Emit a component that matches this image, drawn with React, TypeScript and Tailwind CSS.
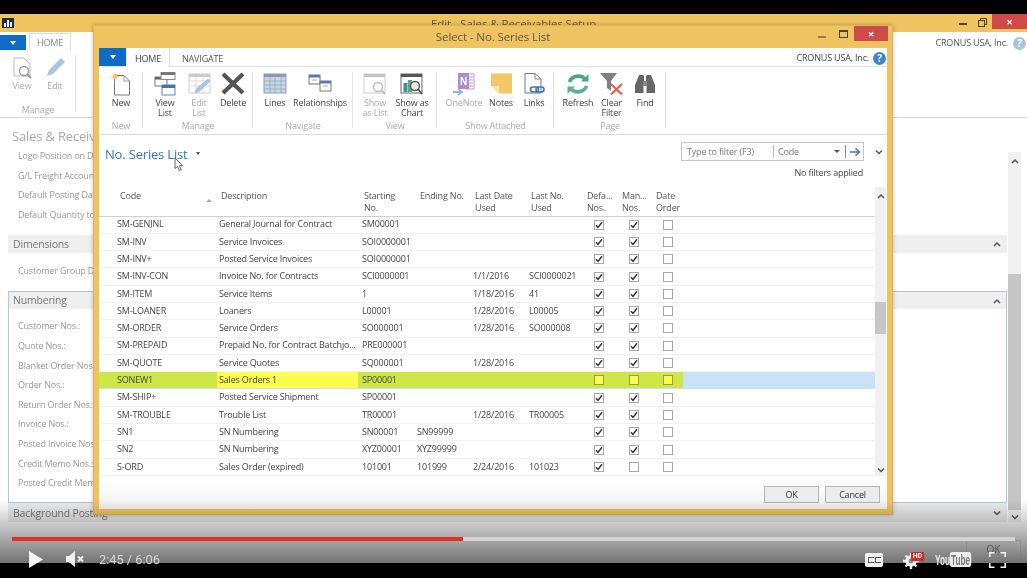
import React from "react";

const rows: [string, string, string, string, string, string, boolean, boolean, boolean][] = [
  ["SM-GENJNL", "General Journal for Contract", "SM00001", "", "", "", true, true, false],
  ["SM-INV", "Service Invoices", "SOI0000001", "", "", "", true, true, false],
  ["SM-INV+", "Posted Service Invoices", "SOI0000001", "", "", "", true, true, false],
  ["SM-INV-CON", "Invoice No. for Contracts", "SCI0000001", "", "1/1/2016", "SCI0000021", true, true, false],
  ["SM-ITEM", "Service Items", "1", "", "1/18/2016", "41", true, true, false],
  ["SM-LOANER", "Loaners", "L00001", "", "1/28/2016", "L00005", true, true, false],
  ["SM-ORDER", "Service Orders", "SO000001", "", "1/28/2016", "SO000008", true, true, false],
  ["SM-PREPAID", "Prepaid No. for Contract Batchjo...", "PRE000001", "", "", "", true, true, false],
  ["SM-QUOTE", "Service Quotes", "SQ000001", "", "1/28/2016", "", true, true, false],
  ["SONEW1", "Sales Orders 1", "SP00001", "", "", "", false, false, false],
  ["SM-SHIP+", "Posted Service Shipment", "SP00001", "", "", "", true, true, false],
  ["SM-TROUBLE", "Trouble List", "TR00001", "", "1/28/2016", "TR00005", true, true, false],
  ["SN1", "SN Numbering", "SN00001", "SN99999", "", "", true, true, false],
  ["SN2", "SN Numbering", "XYZ00001", "XYZ99999", "", "", true, true, false],
  ["S-ORD", "Sales Order (expired)", "101001", "101999", "2/24/2016", "101023", true, false, false],
];

function Check({ on, hl }: { on: boolean; hl?: boolean }) {
  return (
    <div className={`w-[10px] h-[10px] border flex items-center justify-center ${hl ? "border-[#9a9a60] bg-[#fdfb4e]" : "border-[#a8a8a8] bg-white"}`}>
      {on && (
        <svg width="8" height="8" viewBox="0 0 8 8">
          <path d="M1 4.2 L3 6.4 L7 1.2" fill="none" stroke="#333" strokeWidth="1.5" />
        </svg>
      )}
    </div>
  );
}

function Chevron({ up, className = "" }: { up?: boolean; className?: string }) {
  return (
    <svg width="8" height="6" viewBox="0 0 8 6" className={className}>
      <path d={up ? "M1 5 L4 2 L7 5" : "M1 1.5 L4 4.5 L7 1.5"} fill="none" stroke="#555" strokeWidth="1.5" />
    </svg>
  );
}

function Help({ color }: { color: string }) {
  return (
    <div className="w-[13px] h-[13px] rounded-full flex items-center justify-center text-white text-[10px] font-bold leading-none" style={{ backgroundColor: color }}>
      ?
    </div>
  );
}

const I = ({ w = 30, children }: { w?: number; children: React.ReactNode }) => (
  <svg width={w} height="24" viewBox={`0 0 ${w} 24`}>{children}</svg>
);

const IconNew = () => (
  <I>
    <path d="M8.5 3.5 H18 L23.5 9 V23 H8.5 Z" fill="#fff" stroke="#777" />
    <path d="M18 3.5 V9 H23.5" fill="none" stroke="#999" />
    <circle cx="9" cy="4.5" r="2.4" fill="#f0c060" />
    <path d="M9 0 V9 M4.5 4.5 H13.5 M6 1.5 L12 7.5 M12 1.5 L6 7.5" stroke="#f0c878" strokeWidth="0.8" />
  </I>
);
const IconViewList = () => (
  <I>
    <rect x="5" y="5" width="12" height="9" fill="#fff" stroke="#777" />
    <rect x="5" y="5" width="12" height="2.5" fill="#666" />
    <rect x="11" y="0.5" width="14" height="7" fill="#fff" stroke="#888" />
    <rect x="11" y="0.5" width="14" height="2.5" fill="#777" />
    <rect x="12" y="13" width="13" height="10" fill="#fff" stroke="#5f86b5" />
    <rect x="12" y="13" width="13" height="3" fill="#3f74b0" />
  </I>
);
const IconEditList = () => (
  <I>
    <rect x="5" y="2" width="21" height="19" fill="#fff" stroke="#ccc" />
    <rect x="5" y="2" width="21" height="3" fill="#ccc" />
    <path d="M5 9 H26 M5 14 H26 M12 5 V21 M19 5 V21" stroke="#ddd" />
    <path d="M11 21 L13 16 L24 7 L26 9 L16 19 Z" fill="#a9c6e4" stroke="#8fb3d8" strokeWidth="0.5" />
  </I>
);
const IconDelete = () => (
  <I>
    <path d="M5 2 L25 21 M25 2 L5 21" stroke="#555" strokeWidth="4.2" />
  </I>
);
const IconLines = () => (
  <I w={26}>
    <rect x="2" y="2" width="22" height="19" fill="#c9d6e6" stroke="#8ea0b5" />
    <rect x="2" y="2" width="22" height="3" fill="#8a9bb0" />
    <path d="M2 9 H24 M2 13 H24 M2 17 H24 M8 5 V21 M13 5 V21 M19 5 V21" stroke="#8ea0b5" strokeWidth="0.7" />
  </I>
);
const IconRelationships = () => (
  <I>
    <rect x="4" y="3" width="11" height="9" fill="#fff" stroke="#777" />
    <rect x="4" y="3" width="11" height="2.5" fill="#4f7fb5" />
    <rect x="15" y="9" width="11" height="10" fill="#fff" stroke="#777" />
    <rect x="15" y="9" width="11" height="2.5" fill="#4f7fb5" />
    <path d="M7 8 H12 M18 14 H23" stroke="#aaa" />
  </I>
);
const IconShowList = () => (
  <I>
    <rect x="4" y="2" width="21" height="19" fill="#fff" stroke="#ccc" />
    <rect x="4" y="2" width="21" height="3" fill="#c4c4c4" />
    <circle cx="18" cy="15" r="4.5" fill="#fff" stroke="#bbb" strokeWidth="1.3" />
    <path d="M21 18 L25 22" stroke="#bbb" strokeWidth="1.8" />
  </I>
);
const IconShowChart = () => (
  <I>
    <rect x="4" y="2" width="21" height="19" fill="#fff" stroke="#666" />
    <rect x="4" y="2" width="21" height="3" fill="#555" />
    <rect x="6.5" y="11" width="4" height="9" fill="#3f8fa8" />
    <rect x="11" y="8" width="4" height="12" fill="#5fa97a" />
    <circle cx="18" cy="14" r="4.5" fill="#e8eef2" stroke="#555" strokeWidth="1.4" />
    <path d="M21 17 L25 22" stroke="#555" strokeWidth="2" />
  </I>
);
const IconOneNote = () => (
  <I>
    <rect x="17" y="2" width="8" height="15" fill="#fff" stroke="#b79ccc" />
    <path d="M18 5 H24 M18 8 H24 M18 11 H24 M18 14 H24" stroke="#b79ccc" />
    <rect x="9" y="1" width="11" height="16" fill="#b08cc8" />
    <text x="14.5" y="13" fontSize="10" fontWeight="700" fill="#fff" textAnchor="middle" fontFamily="Liberation Sans, sans-serif">N</text>
    <path d="M4 20 H12 M9 17 L13 20 L9 23" fill="none" stroke="#8fb8e0" strokeWidth="1.8" />
  </I>
);
const IconNotes = () => (
  <I w={24}>
    <path d="M2 1.5 H23 V21.5 H10 L2 14 Z" fill="#f2c76c" />
    <path d="M2 14 H10 V21.5 Z" fill="#fbe3a8" />
  </I>
);
const IconLinks = () => (
  <I w={24}>
    <path d="M3 1.5 H13 L19 7 V21 H3 Z" fill="#fff" stroke="#777" />
    <path d="M13 1.5 V7 H19" fill="none" stroke="#888" />
    <rect x="8.5" y="15" width="8" height="5" rx="2.5" fill="#fff" stroke="#3f74b8" strokeWidth="1.6" />
    <rect x="14" y="15" width="8" height="5" rx="2.5" fill="none" stroke="#3f74b8" strokeWidth="1.6" />
  </I>
);
const IconRefresh = () => (
  <I>
    <path d="M6.5 10 A9 8 0 0 1 22 7" fill="none" stroke="#4fa58a" strokeWidth="3.6" />
    <path d="M18 9.5 H25.5 V2 Z" fill="#4fa58a" />
    <path d="M23.5 14 A9 8 0 0 1 8 17" fill="none" stroke="#5fb090" strokeWidth="3.6" />
    <path d="M12 14.5 H4.5 V22 Z" fill="#5fb090" />
  </I>
);
const IconClearFilter = () => (
  <I>
    <path d="M3 1 H20 L14 9 V19 L10 16 V9 Z" fill="#808080" />
    <path d="M14 12 L25 22.5 M25 12 L14 22.5" stroke="#df5a4f" strokeWidth="2" />
  </I>
);
const IconFind = () => (
  <I>
    <rect x="10" y="4" width="4" height="6" fill="#5c5c5c" />
    <rect x="16" y="4" width="4" height="6" fill="#5c5c5c" />
    <path d="M7 8 L9 3 H13.5 V21 H5 V13 Z" fill="#666" />
    <path d="M23 8 L21 3 H16.5 V21 H25 V13 Z" fill="#666" />
    <rect x="13" y="9" width="4" height="5" fill="#888" />
  </I>
);

function Item({ w, icon, label, label2, dim }: { w: number; icon: React.ReactNode; label: string; label2?: string; dim?: boolean }) {
  return (
    <div className={`flex flex-col items-center shrink-0 ${dim ? "text-[#aaa]" : "text-[#444]"}`} style={{ width: w }}>
      <div className="h-[24px] flex items-center justify-center">{icon}</div>
      <div className="mt-[2px] leading-[10px] text-center whitespace-nowrap">
        {label}
        {label2 && <br />}
        {label2}
      </div>
    </div>
  );
}

function Group({ w, pl, label, children }: { w: number; pl?: number; label: string; children: React.ReactNode }) {
  return (
    <div className="relative shrink-0 h-[59px] mt-[5px] flex flex-col" style={{ width: w }}>
      <div className="absolute right-0 top-0 h-[56px] w-px bg-[#e2e2e2]" />
      <div className="flex flex-1" style={{ paddingLeft: pl ?? 0 }}>{children}</div>
      <div className="text-center text-[#aaa] leading-[10px] text-[9px]">{label}</div>
    </div>
  );
}

function Dialog() {
  return (
    <div className="absolute left-[93px] top-[11px] w-[800px] h-[490px] bg-[#efc35f] border border-[#dcb45a] flex flex-col shadow-[0_0_4px_rgba(0,0,0,0.25)] text-[9px] tracking-[-0.18px]">
      {/* title bar */}
      <div className="relative h-[22px] shrink-0 flex items-center justify-center text-[#5f5a4a] text-[11.5px] tracking-[-0.1px]">
        <span>Select - No. Series List</span>
        <div className="absolute right-[4px] top-0 flex items-start">
          <div className="w-[8px] h-[2px] bg-[#8d7f5c] mt-[10px] mr-[13px]" />
          <div className="w-[9px] h-[8px] border border-[#444] border-t-[2px] mt-[4px] mr-[6px]" />
          <div className="w-[34px] h-[15px] bg-[#cf4b4a] flex items-center justify-center text-white text-[11px] font-bold leading-none">×</div>
        </div>
      </div>
      <div className="flex-1 mx-[5px] mb-[5px] bg-white flex flex-col min-h-0">
        {/* tabs */}
        <div className="h-[19px] shrink-0 flex items-stretch border-b border-[#e0e0e0] pr-[1px]">
          <div className="w-[27px] h-[18px] bg-[#0f6cc4] flex items-center justify-center">
            <div className="w-0 h-0 border-x-[3.5px] border-x-transparent border-t-[4px] border-t-white" />
          </div>
          <div className="w-[44px] h-[19px] border-x border-[#e0e0e0] bg-white flex items-center justify-center text-[#444] pt-[3px]">HOME</div>
          <div className="ml-[12px] flex items-center text-[#555] pt-[3px]">NAVIGATE</div>
          <div className="ml-auto flex items-center gap-[4px] text-[#444] pt-[2px]">
            <span>CRONUS USA, Inc.</span>
            <Help color="#3f86c8" />
          </div>
        </div>
        {/* ribbon */}
        <div className="h-[68px] shrink-0 flex border-b border-[#dcdcdc]">
          <Group w={44} label="New">
            <Item w={44} icon={<IconNew />} label="New" />
          </Group>
          <Group w={110} pl={5} label="Manage">
            <Item w={34} icon={<IconViewList />} label="View" label2="List" />
            <Item w={34} icon={<IconEditList />} label="Edit" label2="List" dim />
            <Item w={34} icon={<IconDelete />} label="Delete" />
          </Group>
          <Group w={100} pl={4} label="Navigate">
            <Item w={36} icon={<IconLines />} label="Lines" />
            <Item w={54} icon={<IconRelationships />} label="Relationships" />
          </Group>
          <Group w={84} pl={4} label="View">
            <Item w={36} icon={<IconShowList />} label="Show" label2="as List" dim />
            <Item w={38} icon={<IconShowChart />} label="Show as" label2="Chart" />
          </Group>
          <Group w={117} pl={8} label="Show Attached">
            <Item w={38} icon={<IconOneNote />} label="OneNote" dim />
            <Item w={36} icon={<IconNotes />} label="Notes" />
            <Item w={30} icon={<IconLinks />} label="Links" />
          </Group>
          <Group w={112} pl={7} label="Page">
            <Item w={34} icon={<IconRefresh />} label="Refresh" />
            <Item w={33} icon={<IconClearFilter />} label="Clear" label2="Filter" />
            <Item w={34} icon={<IconFind />} label="Find" />
          </Group>
        </div>
        {/* list header */}
        <div className="relative h-[52px] shrink-0 flex justify-between pl-[6px] pr-[4px]">
          <div className="flex items-start pt-[10px] text-[13px] leading-[18px] text-[#2f7ab8]">
            No. Series List
            <div className="ml-[8px] mt-[7px] w-0 h-0 border-x-[2.5px] border-x-transparent border-t-[3px] border-t-[#555]" />
          </div>
          {/* mouse pointer */}
          <svg width="10" height="15" viewBox="0 0 10 15" className="absolute left-[75px] top-[22px]">
            <path d="M1 1 V11.5 L3.5 9.5 L5.5 13.5 L7.3 12.6 L5.4 8.8 L8.5 8.5 Z" fill="#fff" stroke="#555" strokeWidth="0.9" />
          </svg>
          <div className="flex flex-col items-end pt-[7px]">
            <div className="flex items-start">
              <div className="w-[183px] h-[19px] border border-[#c4c4c4] flex items-center text-[#777]">
                <div className="w-[92px] pl-[5px] border-r border-[#bbb] h-[13px] flex items-center">Type to filter (F3)</div>
                <div className="w-[72px] pl-[4px] flex items-center justify-between pr-[5px] h-[13px] border-r border-[#888]">
                  <span>Code</span>
                  <div className="w-0 h-0 border-x-[3px] border-x-transparent border-t-[3.5px] border-t-[#555]" />
                </div>
                <svg width="14" height="10" viewBox="0 0 14 10" className="ml-[2px]">
                  <path d="M2 5 H11 M7.5 1.5 L11.5 5 L7.5 8.5" fill="none" stroke="#3f78b5" strokeWidth="1.6" />
                </svg>
              </div>
              <Chevron className="ml-[11px] mt-[7px]" />
            </div>
            <div className="mr-[20px] mt-[6px] text-[#444] leading-[12px]">No filters applied</div>
          </div>
        </div>
        {/* table + scrollbar */}
        <div className="h-[290px] shrink-0 flex">
          <div className="w-[776px] shrink-0 text-[#454545]">
            <div className="h-[29.5px] border-b border-[#d0d0d0] grid grid-cols-[118px_141px_57px_56px_56px_54px_35px_35px_32px_1fr] leading-[11.5px] text-[#555] pt-[3px]">
              <div className="pl-[21px] relative">
                Code
                <div className="absolute right-[5px] top-[9px] w-0 h-0 border-x-[3.5px] border-x-transparent border-b-[3.5px] border-b-[#aaa]" />
              </div>
              <div className="pl-[4px]">Description</div>
              <div className="pl-[6px]">Starting<br />No.</div>
              <div className="pl-[5px] whitespace-nowrap">Ending No.</div>
              <div className="pl-[4px]">Last Date<br />Used</div>
              <div className="pl-[4px]">Last No.<br />Used</div>
              <div className="pl-[6px]">Defa...<br />Nos.</div>
              <div className="pl-[6px]">Man...<br />Nos.</div>
              <div className="pl-[5px]">Date<br />Order</div>
            </div>
            {rows.map((r) => {
              const hl = r[0] === "SONEW1";
              const g = hl ? "bg-[#cfe647]" : "";
              return (
                <div key={r[0]} className={`h-[17.3px] grid grid-cols-[118px_141px_57px_56px_56px_54px_35px_35px_32px_1fr] items-stretch border-b ${hl ? "border-transparent bg-[#c9e2f5]" : "border-[#f1f1f1]"}`}>
                  <div className={`pl-[18px] pb-[1px] flex items-center ${g}`}>{r[0]}</div>
                  <div className={`pl-[2px] pb-[1px] flex items-center whitespace-nowrap ${hl ? "bg-[#fdfb4e]" : ""}`}>{r[1]}</div>
                  <div className={`pl-[4px] pb-[1px] flex items-center ${g}`}>{r[2]}</div>
                  <div className={`pl-[2px] pb-[1px] flex items-center ${g}`}>{r[3]}</div>
                  <div className={`pl-[2px] pb-[1px] flex items-center ${g}`}>{r[4]}</div>
                  <div className={`pl-[2px] pb-[1px] flex items-center whitespace-nowrap ${g}`}>{r[5]}</div>
                  <div className={`flex items-center justify-center ${g}`}><Check on={r[6]} hl={hl} /></div>
                  <div className={`flex items-center justify-center ${g}`}><Check on={r[7]} hl={hl} /></div>
                  <div className={`flex items-center justify-center pl-[2px] ${g}`}><Check on={r[8]} hl={hl} /></div>
                  <div />
                </div>
              );
            })}
          </div>
          <div className="w-[11px] shrink-0 h-[289px] bg-[#f0f0f0] flex flex-col items-center pt-[6px]">
            <Chevron up />
            <div className="mt-[103px] w-full h-[32px] bg-[#c6c6c6]" />
            <div className="flex-1" />
            <Chevron className="mb-[3px]" />
          </div>
        </div>
        {/* footer */}
        <div className="flex-1 flex justify-end items-start gap-[6px] pt-[9px] pr-[7px] bg-gradient-to-b from-white to-[#f2f2f2]">
          <div className="w-[55px] h-[17px] border border-[#b5b5b5] bg-[#ececec] flex items-center justify-center text-[#333]">OK</div>
          <div className="w-[55px] h-[17px] border border-[#b5b5b5] bg-[#ececec] flex items-center justify-center text-[#333]">Cancel</div>
        </div>
      </div>
    </div>
  );
}

function BackgroundWindow() {
  const labels1 = ["Logo Position on D", "G/L Freight Accoun", "Default Posting Dat", "Default Quantity to"];
  const labels2 = ["Customer Nos.:", "Quote Nos.:", "Blanket Order Nos.:", "Order Nos.:", "Return Order Nos.:", "Invoice Nos.:", "Posted Invoice Nos", "Credit Memo Nos.:", "Posted Credit Mem"];
  return (
    <div className="flex-1 min-h-0 flex flex-col bg-white text-[9px] text-[#999] tracking-[-0.18px]">
      {/* title */}
      <div className="relative h-[18px] shrink-0 bg-[#efc35f] flex items-center justify-center text-[#5f5a4a] text-[11.5px] tracking-[-0.1px]">
        <div className="absolute left-[2px] top-[4px] w-[12px] h-[10px] bg-[#1c2c50] flex items-end justify-center gap-[1px] pb-[1px]">
          <div className="w-[2px] h-[4px] bg-white" />
          <div className="w-[2px] h-[7px] bg-white" />
          <div className="w-[2px] h-[5px] bg-white" />
        </div>
        <span className="mt-[1px]">Edit - Sales &amp; Receivables Setup</span>
        <div className="absolute right-0 top-0 flex items-start">
          <div className="w-[8px] h-[2px] bg-[#444] mt-[9px] mr-[11px]" />
          <svg width="9" height="9" viewBox="0 0 9 9" className="mt-[4px] mr-[5px]">
            <path d="M2.5 2 V0.5 H8.5 V6.5 H7" fill="none" stroke="#444" />
            <rect x="0.5" y="2.5" width="6" height="6" fill="#efc35f" stroke="#444" />
          </svg>
          <div className="w-[35px] h-[15px] bg-[#cf4b4a] flex items-center justify-center text-white text-[11px] font-bold leading-none">×</div>
        </div>
      </div>
      {/* tabs */}
      <div className="h-[18px] shrink-0 flex items-stretch pr-[1px] text-[#888]">
        <div className="w-[26px] h-[15px] mt-[3px] bg-[#0f6cc4] flex items-center justify-center">
          <div className="w-0 h-0 border-x-[3.5px] border-x-transparent border-t-[4px] border-t-white" />
        </div>
        <div className="ml-[3px] mt-[1px] w-[42px] border-x border-t border-[#ddd] flex items-center justify-center pt-[2px]">HOME</div>
        <div className="ml-auto flex items-center gap-[5px] pt-[4px] text-[#555]">
          <span>CRONUS USA, Inc.</span>
          <Help color="#a9c4de" />
        </div>
      </div>
      {/* ribbon */}
      <div className="h-[68px] shrink-0 flex border-b border-[#d8d8d8] pt-[5px] text-[#aaa]">
        <div className="relative w-[76px] h-[60px] flex flex-col">
          <div className="absolute right-0 top-0 h-[57px] w-px bg-[#e2e2e2]" />
          <div className="flex flex-1 pl-[6px]">
            <Item w={32} dim icon={
              <I>
                <path d="M7 3 H17 L23 9 V21 H7 Z" fill="#fff" stroke="#bbb" />
                <circle cx="17" cy="16" r="4.5" fill="#fff" stroke="#999" strokeWidth="1.3" />
                <path d="M20 19 L24 23" stroke="#999" strokeWidth="1.8" />
              </I>
            } label="View" />
            <Item w={34} dim icon={
              <I>
                <path d="M7 21 L9 15 L21 3 L25 7 L13 19 Z" fill="#a8c6e4" />
              </I>
            } label="Edit" />
          </div>
          <div className="text-center text-[#aaa] leading-[10px]">Manage</div>
        </div>
      </div>
      {/* page */}
      <div className="flex flex-1 min-h-0">
        <div className="flex-1 min-w-0 flex flex-col pl-[8px] pr-[1px]">
          <div className="text-[13px] leading-[20px] mt-[8px] ml-[4px] text-[#aaa] whitespace-nowrap">Sales &amp; Receiv</div>
          <div className="pl-[10px] flex flex-col">
            {labels1.map((l) => (
              <div key={l} className="h-[19.6px] flex items-center whitespace-nowrap">{l}</div>
            ))}
          </div>
          <div className="mt-[11px] h-[18px] shrink-0 bg-[#eeeeee] flex items-center justify-between pl-[5px] pr-[6px] text-[10.5px] text-[#777]">
            Dimensions <Chevron up />
          </div>
          <div className="pl-[10px] pb-[3px] h-[38px] flex items-center whitespace-nowrap">Customer Group D</div>
          <div className="h-[212px] shrink-0 border border-[#a9c8ec] flex flex-col">
            <div className="h-[17px] bg-[#efefef] flex items-center justify-between pl-[4px] pr-[5px] text-[10.5px] text-[#777]">
              Numbering <Chevron up />
            </div>
            <div className="pl-[9px] pt-[7px] flex flex-col">
              {labels2.map((l) => (
                <div key={l} className="h-[19.6px] flex items-center whitespace-nowrap">{l}</div>
              ))}
            </div>
          </div>
          <div className="h-[19px] shrink-0 bg-[#ececec] flex items-center justify-between pl-[5px] pr-[6px] pt-[1px] text-[10.5px] text-[#777]">
            Background Posting <Chevron />
          </div>
        </div>
        <div className="w-[19px] shrink-0 pr-[6px]">
          <div className="mt-[34px] h-[370px] bg-[#f0f0f0] flex flex-col items-center pt-[6px]">
            <Chevron up />
            <div className="mt-[110px] w-full h-[236px] bg-[#c6c6c6]" />
            <Chevron className="mt-[4px]" />
          </div>
        </div>
      </div>
    </div>
  );
}

function Player() {
  return (
    <>
      <div className="absolute left-0 right-0 top-[500px] h-[63px] bg-gradient-to-b from-[rgba(0,0,0,0)] to-[rgba(0,0,0,0.55)] pointer-events-none" />
      <div className="absolute left-[966px] top-[540px] w-[55px] h-[23px] border-l border-t border-r border-[rgba(120,120,120,0.35)] flex justify-center text-[#555] text-[10px] leading-[14px] pt-[1px]">OK</div>
      <div className="absolute left-0 right-0 top-[537px] flex flex-col">
        <div className="mx-[12px] h-[4px] flex">
          <div className="w-[451px] bg-[#e0302a]" />
          <div className="flex-1 bg-[#d4d4d4]" />
        </div>
        <div className="mt-[10px] flex items-start pl-[29px] pr-[21px] h-[20px] text-[#d5d5d5] text-[12.8px] font-[Roboto,sans-serif]">
          <svg width="14" height="17" viewBox="0 0 14 17"><path d="M0 0 L14 8.5 L0 17 Z" fill="#f5f5f5" /></svg>
          <svg width="20" height="16" viewBox="0 0 20 16" className="ml-[23px]">
            <path d="M0 5 H3 L9 0 V16 L3 11 H0 Z" fill="#f0f0f0" />
            <path d="M12 5.5 L17 10.5 M17 5.5 L12 10.5" stroke="#f0f0f0" strokeWidth="2" />
          </svg>
          <span className="ml-[13px] leading-[16px] mt-[1px]">2:45 / 6:06</span>
          <div className="ml-auto flex items-start">
            <div className="w-[18px] h-[14px] mt-[2px] bg-[#f0f0f0] rounded-[2px] flex items-center justify-center gap-[1px]">
              <div className="w-[6px] h-[6px] border border-r-0 border-[#555]" />
              <div className="w-[6px] h-[6px] border border-r-0 border-[#555]" />
            </div>
            <div className="relative ml-[20px] w-[22px] h-[17px] mt-[1px]">
              <svg width="16" height="16" viewBox="0 0 16 16" className="absolute left-0 top-[1px]">
                <circle cx="8" cy="8" r="4.2" fill="none" stroke="#f0f0f0" strokeWidth="3" />
                <path d="M8 0 V16 M0 8 H16 M2.5 2.5 L13.5 13.5 M13.5 2.5 L2.5 13.5" stroke="#f0f0f0" strokeWidth="2.4" />
                <circle cx="8" cy="8" r="2.4" fill="#8a8a8a" />
              </svg>
              <div className="absolute left-[8px] top-0 w-[13px] h-[9px] bg-[#cc2b2b] text-white text-[7px] font-bold leading-[9px] text-center rounded-[1px]">HD</div>
            </div>
            <div className="ml-[10px] w-[38px] shrink-0 mt-[1px]">
              <div className="flex items-center whitespace-nowrap text-[#eee] font-['Liberation_Sans',sans-serif] text-[15px] leading-[15px] font-bold scale-x-[0.55] origin-left w-fit">
                <span>You</span>
                <span className="bg-[#eee] text-[#777] rounded-[4px] px-[2px]">Tube</span>
              </div>
            </div>
            <svg width="17" height="16" viewBox="0 0 17 16" className="ml-[16px] mt-[1px]">
              <path d="M0.8 5 V0.8 H5.5 M11.5 0.8 H16.2 V5 M16.2 11 V15.2 H11.5 M5.5 15.2 H0.8 V11" fill="none" stroke="#f5f5f5" strokeWidth="1.6" />
            </svg>
          </div>
        </div>
      </div>
    </>
  );
}

export default function App() {
  return (
    <div className="relative w-[1027px] h-[578px] overflow-hidden bg-black flex flex-col font-['Open_Sans',sans-serif] blur-[0.3px]">
      <div className="h-[14px] shrink-0 bg-black" />
      <div className="relative h-[549px] shrink-0 flex flex-col">
        <BackgroundWindow />
        <Dialog />
      </div>
      <div className="flex-1 bg-black" />
      <Player />
    </div>
  );
}
